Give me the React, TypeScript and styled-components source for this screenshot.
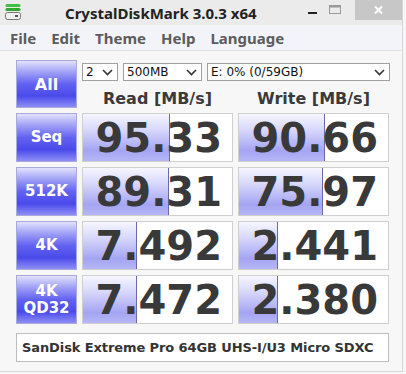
import React from 'react';
import styled, { createGlobalStyle } from 'styled-components';

const GlobalStyle = createGlobalStyle`
	html, body {
		margin: 0;
		padding: 0;
		background: #f6f6f6;
	}
	body {
		width: 406px;
		height: 374px;
		overflow: hidden;
	}
`;

const Window = styled.div`
	width: 402px;
	height: 371px;
	border-right: 1px solid #d6d6d6;
	border-bottom: 1px solid #d6d6d6;
	background: #f7f7f7;
	display: flex;
	flex-direction: column;
`;

const TitleBar = styled.div`
	height: 25px;
	background: #ebebeb;
	display: flex;
	align-items: flex-start;
`;

const AppIcon = styled.svg`
	margin: 4px 0 0 5px;
	flex: none;
`;

const Title = styled.div`
	margin: 3px 0 0 44px;
	font-family: 'Noto Sans', sans-serif;
	font-weight: 700;
	font-size: 15px;
	color: #222;
	flex: 1;
`;

const Caption = styled.div`
	display: flex;
	align-items: flex-start;
	height: 20px;
`;

const CaptionButton = styled.div<{ $close?: boolean }>`
	width: ${(p) => (p.$close ? 47 : 23)}px;
	height: 20px;
	margin-left: ${(p) => (p.$close ? 8 : 0)}px;
	background: ${(p) => (p.$close ? '#c7c7c7' : 'transparent')};
	display: flex;
	align-items: center;
	justify-content: center;
`;

const MenuBar = styled.div`
	height: 25px;
	background: #f3f4f9;
	border-bottom: 1px solid #e2e2e6;
	display: flex;
	align-items: center;
	gap: 15px;
	padding-left: 10px;
	font-family: 'Noto Sans', sans-serif;
	font-weight: 700;
	font-size: 15px;
	color: #5c5c5c;
`;

const Content = styled.div`
	flex: 1;
	padding: 9px 0 0 16px;
	display: flex;
	flex-direction: column;
`;

const Grid = styled.div`
	display: grid;
	grid-template-columns: 61px 151px 151px;
	grid-template-rows: 48px repeat(4, 49px);
	column-gap: 5px;
	row-gap: 5px;
`;

const TestButton = styled.div<{ $big?: boolean }>`
	box-sizing: border-box;
	border: 1px solid #a9a9dc;
	background: linear-gradient(180deg, #e2e2fd 0%, #a6a6f7 22%, #6262f0 50%, #4a4aeb 76%, #8e8ef6 100%);
	color: #fff;
	font-family: 'DejaVu Sans', Verdana, sans-serif;
	font-weight: 700;
	font-size: ${(p) => (p.$big ? 16 : 15)}px;
	line-height: 17px;
	display: flex;
	align-items: center;
	justify-content: center;
	text-align: center;
`;

const TopPanel = styled.div`
	grid-column: 2 / 4;
	display: flex;
	flex-direction: column;
	padding-top: 3px;
`;

const SelectRow = styled.div`
	display: flex;
	gap: 5px;
	width: 308px;
`;

const Select = styled.div<{ $w: number }>`
	box-sizing: border-box;
	width: ${(p) => p.$w}px;
	height: 18px;
	border: 1px solid #a0a0a0;
	background: #fff;
	display: flex;
	align-items: center;
	justify-content: space-between;
	padding: 0 4px 0 3px;
	font-family: 'DejaVu Sans', Tahoma, sans-serif;
	font-size: 12px;
	color: #111;
`;

const HeaderRow = styled.div`
	display: grid;
	grid-template-columns: 151px 151px;
	column-gap: 5px;
	margin-top: 8px;
`;

const Header = styled.div`
	text-align: center;
	font-family: 'DejaVu Sans', Verdana, sans-serif;
	font-weight: 700;
	font-size: 16px;
	color: #3a3a3a;
`;

const Cell = styled.div`
	box-sizing: border-box;
	position: relative;
	border: 1px solid #cfcfcf;
	background: #fff;
	display: flex;
	align-items: center;
	justify-content: flex-end;
	padding-right: 10px;
	overflow: hidden;
`;

const Meter = styled.div`
	position: absolute;
	left: 0;
	top: 0;
	bottom: 0;
	border-right: 1px solid #6a6aa8;
	background: linear-gradient(180deg, #f6f6ff 0%, #d6d6fb 35%, #a4a4f3 78%, #b6b6f6 100%);
`;

const Score = styled.span`
	position: relative;
	font-family: 'DejaVu Sans', Verdana, sans-serif;
	font-weight: 700;
	font-size: 40px;
	color: #393939;
	line-height: 1;
`;

const Comment = styled.div`
	box-sizing: border-box;
	margin-top: 9px;
	width: 373px;
	height: 29px;
	border: 1px solid #bdbdbd;
	background: #fff;
	display: flex;
	align-items: center;
	padding-left: 5px;
	font-family: 'DejaVu Sans', Tahoma, sans-serif;
	font-weight: 700;
	font-size: 13px;
	letter-spacing: -0.1px;
	color: #333;
`;

const Chevron = () => (
	<svg width="11" height="7" viewBox="0 0 11 7">
		<polyline points="1,1 5.5,5.5 10,1" fill="none" stroke="#333" strokeWidth="1.6" />
	</svg>
);

const rows = [
	{ label: ['Seq'], read: '95.33', write: '90.66' },
	{ label: ['512K'], read: '89.31', write: '75.97' },
	{ label: ['4K'], read: '7.492', write: '2.441' },
	{ label: ['4K', 'QD32'], read: '7.472', write: '2.380' },
];

// CrystalDiskMark meter: log scale, 0.1 .. 10000 MB/s
const meterWidth = (v: string) => `${((Math.log10(parseFloat(v)) + 1) / 5) * 100 - 2}%`;

const ScoreCell = ({ value }: { value: string }) => (
	<Cell>
		<Meter style={{ width: meterWidth(value) }} />
		<Score>{value}</Score>
	</Cell>
);

export default function App() {
	return (
		<>
			<GlobalStyle />
			<Window>
				<TitleBar>
					<AppIcon width="16" height="16" viewBox="0 0 16 16">
						<rect x="0.5" y="0" width="15" height="3" rx="1.5" fill="#3fbf3f" />
						<rect x="0.5" y="4" width="15" height="3" rx="1.5" fill="#2ea82e" />
						<rect x="0.5" y="8.5" width="15" height="7" rx="2" fill="#f0f0f0" stroke="#777" />
						<rect x="10" y="11" width="3" height="2" fill="#555" />
					</AppIcon>
					<Title>CrystalDiskMark 3.0.3 x64</Title>
					<Caption>
						<CaptionButton>
							<svg width="12" height="10" viewBox="0 0 12 10">
								<rect x="1" y="7" width="9" height="2" fill="#222" />
							</svg>
						</CaptionButton>
						<CaptionButton>
							<svg width="13" height="10" viewBox="0 0 13 10">
								<rect x="0.5" y="0.5" width="11" height="8" fill="none" stroke="#9a9a9a" />
								<rect x="0.5" y="0.5" width="11" height="2" fill="#9a9a9a" />
							</svg>
						</CaptionButton>
						<CaptionButton $close>
							<svg width="9" height="8" viewBox="0 0 9 8">
								<path d="M1 0.5 L8 7.5 M8 0.5 L1 7.5" stroke="#fff" strokeWidth="2" />
							</svg>
						</CaptionButton>
					</Caption>
				</TitleBar>
				<MenuBar>
					<span>File</span>
					<span>Edit</span>
					<span>Theme</span>
					<span>Help</span>
					<span>Language</span>
				</MenuBar>
				<Content>
					<Grid>
						<TestButton $big>All</TestButton>
						<TopPanel>
							<SelectRow>
								<Select $w={36}>
									<span>2</span>
									<Chevron />
								</Select>
								<Select $w={79}>
									<span>500MB</span>
									<Chevron />
								</Select>
								<Select $w={183}>
									<span>E: 0% (0/59GB)</span>
									<Chevron />
								</Select>
							</SelectRow>
							<HeaderRow>
								<Header>Read [MB/s]</Header>
								<Header>Write [MB/s]</Header>
							</HeaderRow>
						</TopPanel>
						{rows.map((r) => (
							<React.Fragment key={r.label.join()}>
								<TestButton>
									<div>
										{r.label.map((l) => (
											<div key={l}>{l}</div>
										))}
									</div>
								</TestButton>
								<ScoreCell value={r.read} />
								<ScoreCell value={r.write} />
							</React.Fragment>
						))}
					</Grid>
					<Comment>SanDisk Extreme Pro 64GB UHS-I/U3 Micro SDXC</Comment>
				</Content>
			</Window>
		</>
	);
}
